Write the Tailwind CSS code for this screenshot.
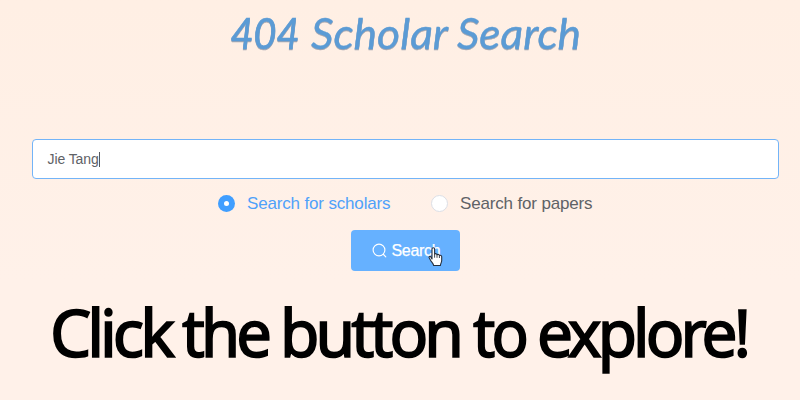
<!DOCTYPE html>
<html lang="en">
<head>
<meta charset="utf-8">
<title>404 Scholar Search</title>
<script src="https://cdn.jsdelivr.net/npm/@tailwindcss/browser@4"></script>
</head>
<body class="w-[800px] h-[400px] overflow-hidden bg-linear-to-b from-[#ffefe4] to-[#fff1e9] to-70% font-['Liberation_Sans',Arial,sans-serif]">
<main class="flex h-full flex-col items-center">
  <h1 class="h-[139px] w-full shrink-0">
    <svg class="block drop-shadow-[0_1px_0.6px_rgba(60,80,110,0.45)] fill-[#5b9bd5] stroke-[#5b9bd5] font-['Lato',sans-serif] text-[42.5px] italic" width="800" height="80">
      <text x="230.5" y="48.5" textLength="69" lengthAdjust="spacingAndGlyphs" stroke-width="0.7">404</text>
      <text x="311" y="48.5" textLength="137" lengthAdjust="spacingAndGlyphs" stroke-width="0.3">Scholar</text>
      <text x="457" y="48.5" textLength="124" lengthAdjust="spacingAndGlyphs" stroke-width="0.3">Search</text>
    </svg>
  </h1>
  <div class="ml-[10px] flex h-[40px] w-[747px] shrink-0 items-center rounded-[4px] border border-[#73b4f8] bg-white pl-[15px] text-[14px] tracking-[-0.1px] text-[#606266]">
    <span>Jie Tang</span><span class="h-[15px] w-px bg-[#55585e]"></span>
  </div>
  <div class="mt-[15px] flex h-[18px] w-full shrink-0 items-center pl-[218px] text-[17px] leading-[18px] tracking-[-0.16px]">
    <span class="flex size-[17px] items-center justify-center rounded-full bg-[#409eff]"><span class="size-[5px] rounded-full bg-white"></span></span>
    <span class="ml-[12px] w-[184px] pt-[2px] text-[#4fa1fa]">Search for scholars</span>
    <span class="size-[17px] rounded-full border border-[#dcdfe6] bg-white"></span>
    <span class="ml-[12px] pt-[2px] text-[#606266]">Search for papers</span>
  </div>
  <button class="relative mt-[18px] ml-[10px] flex h-[41px] w-[109px] shrink-0 items-center rounded-[4px] bg-[#66b1ff] pl-[21px] text-[16px] tracking-[-0.3px] text-white">
    <svg width="16" height="16" viewBox="0 0 16 16" fill="none" stroke="white" stroke-width="1.15" stroke-linecap="round"><circle cx="7" cy="7" r="5.9"/><path d="M11.5 11.5l2.3 2.3"/></svg>
    <span class="ml-[4px] [-webkit-text-stroke:0.25px_white]">Search</span>
    <svg class="absolute top-[16px] left-[77px]" width="16" height="22" viewBox="0 0 16 22" fill="white" stroke="#26303d" stroke-width="1.1" stroke-linejoin="round"><path d="M4 13V3.1C4 1.2 6.6 1.2 6.6 3.1V8.2C7.4 7.3 8.9 7.6 9 8.7C9.9 8 11.2 8.4 11.4 9.5C12.4 8.9 13.7 9.5 13.7 10.8V14.6C13.7 16.4 12.6 17.2 12.4 19.5H5.6C5.4 17.3 3.3 15.9 2.4 13.9L1.2 11.8C.7 10.4 2.1 9.9 2.9 11Z"/><path d="M6.6 8.2v3.5M9 8.7v3.1M11.4 9.5v2.5" fill="none" stroke-width=".9"/></svg>
  </button>
  <h2 class="w-full">
    <svg class="block fill-black stroke-black font-['Noto_Sans',sans-serif] text-[65px] tracking-[-4px]" width="800" height="129" stroke-width="1.7">
      <text x="50" y="86" textLength="121" lengthAdjust="spacingAndGlyphs">Click</text>
      <text x="182" y="86" textLength="86" lengthAdjust="spacingAndGlyphs">the</text>
      <text x="280" y="86" textLength="180" lengthAdjust="spacingAndGlyphs">button</text>
      <text x="473" y="86" textLength="52" lengthAdjust="spacingAndGlyphs">to</text>
      <text x="537" y="86" textLength="210" lengthAdjust="spacingAndGlyphs">explore!</text>
    </svg>
  </h2>
</main>
</body>
</html>
